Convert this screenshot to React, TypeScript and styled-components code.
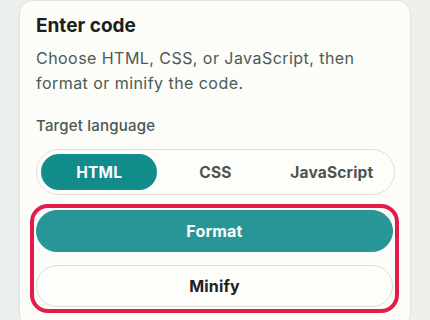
import * as React from 'react'
import styled, { createGlobalStyle } from 'styled-components'

const GlobalStyle = createGlobalStyle`
  html, body {
    margin: 0;
    padding: 0;
  }
  body {
    background: linear-gradient(90deg, #ebefec 0%, #eeefeb 100%);
    font-family: Inter, 'Liberation Sans', sans-serif;
    height: 320px;
    overflow: hidden;
  }
`

const Card = styled.section`
  margin-left: 19px;
  width: 392px;
  box-sizing: border-box;
  background: #fcfcf8;
  border: 1px solid #e4e3dc;
  border-radius: 14px;
  padding: 12px 16px 20px 16px;
`

const Title = styled.h2`
  margin: 0;
  font-size: 19px;
  line-height: 26px;
  font-weight: 700;
  color: #1b201d;
`

const Description = styled.p`
  margin: 7px 0 0;
  max-width: 340px;
  font-size: 16px;
  line-height: 25px;
  letter-spacing: 0.45px;
  color: #4b5a53;
`

const Label = styled.div`
  margin-top: 20px;
  font-size: 15px;
  line-height: 20px;
  font-weight: 500;
  letter-spacing: 0.2px;
  color: #4b5752;
`

const Segmented = styled.div`
  margin-top: 13px;
  display: grid;
  grid-template-columns: repeat(3, 1fr);
  padding: 4px;
  border: 1px solid #e0ded6;
  border-radius: 999px;
  background: #fdfdfa;
  width: 359px;
  box-sizing: border-box;
`

const Segment = styled.button<{ $active?: boolean }>`
  height: 36px;
  border: none;
  border-radius: 999px;
  font-family: inherit;
  font-size: 15.5px;
  font-weight: 700;
  letter-spacing: 0.2px;
  cursor: pointer;
  background: ${p => (p.$active ? '#128b8b' : 'transparent')};
  color: ${p => (p.$active ? '#ffffff' : '#4a5550')};
`

const Actions = styled.div`
  margin-top: 15px;
  width: 357px;
  display: flex;
  flex-direction: column;
  gap: 13px;
  border-radius: 12px;
  outline: 4px solid #e21b4b;
  outline-offset: 2px;
`

const ActionButton = styled.button<{ $primary?: boolean }>`
  height: 42px;
  border-radius: 21px;
  font-family: inherit;
  font-size: 16px;
  font-weight: 700;
  letter-spacing: 0.2px;
  cursor: pointer;
  border: 1px solid ${p => (p.$primary ? '#289696' : '#dedcd4')};
  background: ${p => (p.$primary ? '#289696' : '#fdfdf9')};
  color: ${p => (p.$primary ? '#ffffff' : '#1d211f')};
`

const languages = ['HTML', 'CSS', 'JavaScript']

export default function App() {
  const [lang, setLang] = React.useState('HTML')
  return (
    <>
      <GlobalStyle />
      <Card>
        <Title>Enter code</Title>
        <Description>
          Choose HTML, CSS, or JavaScript, then format or minify the code.
        </Description>
        <Label>Target language</Label>
        <Segmented>
          {languages.map(l => (
            <Segment key={l} $active={l === lang} onClick={() => setLang(l)}>
              {l}
            </Segment>
          ))}
        </Segmented>
        <Actions>
          <ActionButton $primary>Format</ActionButton>
          <ActionButton>Minify</ActionButton>
        </Actions>
      </Card>
    </>
  )
}
